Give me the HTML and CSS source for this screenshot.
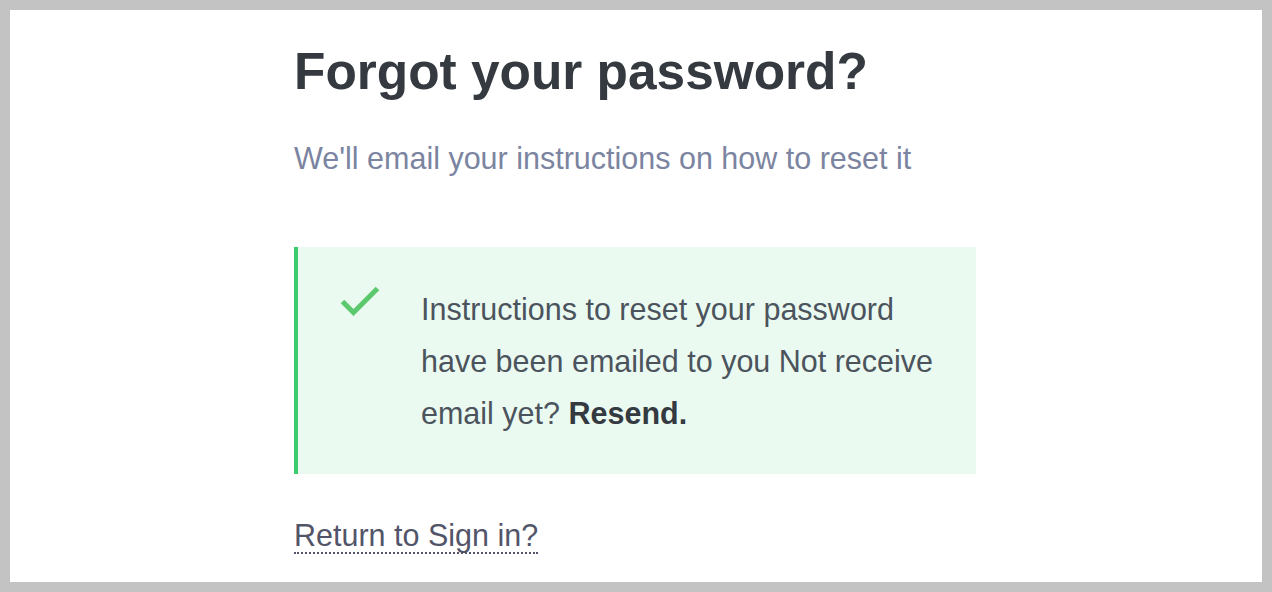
FILE: index.html
```html
<!DOCTYPE html>
<html lang="en">
<head>
<meta charset="utf-8">
<title>Forgot your password?</title>
<link rel="stylesheet" href="styles.css">
</head>
<body>
<main class="container">
  <h1 class="title">Forgot your password?</h1>
  <p class="subtitle">We'll email your instructions on how to reset it</p>
  <div class="alert">
    <svg class="alert-icon" width="40" height="30" viewBox="0 0 40 30" aria-hidden="true">
      <path d="M2.5 15.5 L13.5 26.5 L37.5 2.5" fill="none" stroke="#5cc96f" stroke-width="5"/>
    </svg>
    <p class="alert-text">Instructions to reset your password have been emailed to you Not receive email yet? <strong class="resend">Resend.</strong></p>
  </div>
  <p class="back"><a class="back-link" href="#">Return to Sign in?</a></p>
</main>
</body>
</html>
```
FILE: styles.css
```css
html {
  background: #c3c3c3;
  height: 100%;
}
body {
  margin: 10px;
  height: 572px;
  background: #ffffff;
  overflow: hidden;
  font-family: "Liberation Sans", Arial, sans-serif;
}
.container {
  width: 682px;
  margin: 0 0 0 calc(50% - 342px);
  padding-top: 31px;
}
.title {
  margin: 0;
  font-size: 51.4px;
  line-height: 1.2;
  font-weight: 700;
  color: #343a40;
}
.subtitle {
  margin: 34px 0 0;
  font-size: 30.5px;
  line-height: 1.4;
  color: #7b84a0;
}
.alert {
  margin-top: 68px;
  display: flex;
  align-items: flex-start;
  background: #ebfaf1;
  border-left: 4px solid #3ccb6d;
  padding: 36px 40px 35px 42px;
}
.alert-icon {
  flex: none;
  margin-top: 3px;
  margin-right: 41px;
}
.alert-text {
  margin: 0;
  font-size: 30.5px;
  line-height: 52px;
  color: #4b545d;
}
.resend {
  color: #343a40;
  font-weight: 700;
}
.back {
  margin: 43px 0 0;
  font-size: 30.5px;
  line-height: 1.2;
}
.back-link {
  color: #525569;
  text-decoration: none;
  border-bottom: 2px dotted #525569;
}
```
